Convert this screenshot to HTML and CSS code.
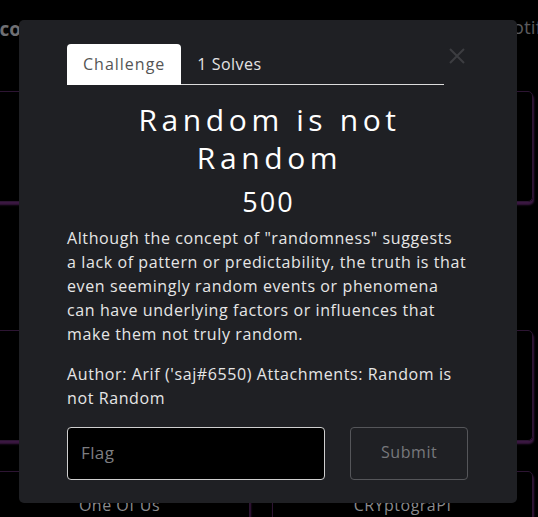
FILE: index.html
```html
<!DOCTYPE html>
<html lang="en">
<head>
<meta charset="utf-8">
<title>Random is not Random</title>
<link rel="stylesheet" href="styles.css">
</head>
<body>
<div class="page">
  <header class="nav">
    <span class="nav-left">Scoreboard</span>
    <span class="nav-right">
      <svg class="bell" width="14" height="16" viewBox="0 0 14 16"><path d="M7 1 C4 1 3 3.5 3 6 L3 10 L1 12 L13 12 L11 10 L11 6 C11 3.5 10 1 7 1 Z M5.5 13.5 C5.5 14.5 6.2 15 7 15 C7.8 15 8.5 14.5 8.5 13.5 Z" fill="#6a6a6d"/></svg>
      <span class="nav-label">Notifications</span>
    </span>
  </header>
  <section class="grid grid-a">
    <div class="card"></div>
    <div class="card"></div>
  </section>
  <section class="grid grid-b">
    <div class="card"></div>
    <div class="card"></div>
  </section>
  <section class="grid grid-c">
    <div class="card"><span class="card-name">One Of Us</span></div>
    <div class="card"><span class="card-name">CRYptograPI</span></div>
  </section>
</div>

<div class="backdrop">
  <div class="modal">
    <div class="modal-head">
      <ul class="tabs">
        <li class="tab active">Challenge</li>
        <li class="tab">1 Solves</li>
      </ul>
      <button class="close" aria-label="Close">
        <svg width="18" height="18" viewBox="0 0 18 18"><path d="M2 2 L16 16 M16 2 L2 16" stroke="#3c3d41" stroke-width="2" fill="none"/></svg>
      </button>
    </div>
    <h2 class="title">Random is not Random</h2>
    <h3 class="value">500</h3>
    <p class="desc">Although the concept of "randomness" suggests<br>a lack of pattern or predictability, the truth is that<br>even seemingly random events or phenomena<br>can have underlying factors or influences that<br>make them not truly random.</p>
    <p class="desc author">Author: Arif ('saj#6550) Attachments: Random is<br>not Random</p>
    <form class="flag-form">
      <input class="flag-input" type="text" placeholder="Flag">
      <button class="submit" type="button">Submit</button>
    </form>
  </div>
</div>
</body>
</html>
```

FILE: styles.css
```css
html, body {
  margin: 0;
  background: #000;
  height: 100%;
  overflow: hidden;
}
body {
  font-family: "Open Sans", "DejaVu Sans", sans-serif;
  color: #ddd;
}
.nav {
  display: flex;
  justify-content: space-between;
  height: 54px;
  align-items: center;
  font-size: 19px;
  margin: 0 -72px 0 -11px;
}
.nav-left {
  font-weight: 700;
  color: #6f6f72;
  padding-top: 3px;
}
.nav-right {
  display: flex;
  align-items: center;
  gap: 6px;
  color: #5a5a5d;
}
.bell {
  margin-top: -1px;
}
.grid {
  display: grid;
  grid-template-columns: 261px 261px;
  column-gap: 22px;
  margin-left: -11px;
}
.grid-a { margin-top: 37px; height: 111px; }
.grid-b { margin-top: 128px; height: 111px; }
.grid-c { margin-top: 30px; height: 80px; }
.card {
  border: 1px solid #2d1533;
  border-radius: 5px;
  box-shadow: 1px 3px 2px #3b1842;
  display: flex;
  justify-content: center;
  align-items: flex-start;
}
.card-name {
  font-size: 16px;
  line-height: 24px;
  color: #8a8a8d;
  margin-top: 21px;
  letter-spacing: 0.5px;
}

.backdrop {
  position: fixed;
  inset: 0;
  padding: 20px 0 0 19px;
}
.modal {
  width: 498px;
  box-sizing: border-box;
  background: #1f2024;
  border-radius: 5px;
  padding: 24px 49px 24px 48px;
  height: 483px;
}
.modal-head {
  display: flex;
  align-items: flex-start;
}
.tabs {
  list-style: none;
  margin: 0;
  padding: 0;
  display: flex;
  width: 377px;
  border-bottom: 1px solid #dcdcdc;
}
.tab {
  padding: 8px 16px;
  line-height: 24px;
  font-size: 16px;
  color: #e4e4e4;
  border-radius: 4px 4px 0 0;
  margin-bottom: -1px;
  letter-spacing: 0.5px;
}
.tab.active {
  background: #fff;
  color: #555;
  border-bottom: 1px solid #fff;
  letter-spacing: 1px;
}
.close {
  background: none;
  border: 0;
  padding: 0;
  margin: 3px 0 0 4px;
  width: 18px;
  height: 18px;
  cursor: pointer;
}
.title {
  margin: 16px 0 0;
  text-align: center;
  font-size: 30px;
  font-weight: 400;
  line-height: 38px;
  letter-spacing: 4.6px;
  color: #fff;
  padding: 0 36px 0 40px;
}
.value {
  margin: 7px 0 0;
  text-align: center;
  font-size: 27px;
  font-weight: 500;
  line-height: 36px;
  letter-spacing: 2px;
  padding-left: 2px;
  color: #fff;
}
.desc {
  margin: 6px 0 0;
  font-size: 16px;
  line-height: 24px;
  letter-spacing: 0.6px;
  color: #e6e6e6;
  white-space: nowrap;
}
.author {
  margin-top: 16px;
}
.flag-form {
  display: flex;
  gap: 25px;
  margin-top: 17px;
}
.flag-input {
  width: 259px;
  height: 53px;
  box-sizing: border-box;
  background: #000;
  border: 1px solid #cfcfcf;
  border-radius: 4px;
  padding: 0 13px 3px;
  font-family: inherit;
  font-size: 17px;
  letter-spacing: 0.4px;
  color: #ddd;
}
.flag-input::placeholder {
  color: #7d7d80;
}
.submit {
  width: 118px;
  height: 53px;
  background: transparent;
  border: 1px solid #55565a;
  border-radius: 4px;
  padding: 0 0 3px;
  font-family: inherit;
  font-size: 16px;
  color: #77787c;
  letter-spacing: 0.6px;
}
```
